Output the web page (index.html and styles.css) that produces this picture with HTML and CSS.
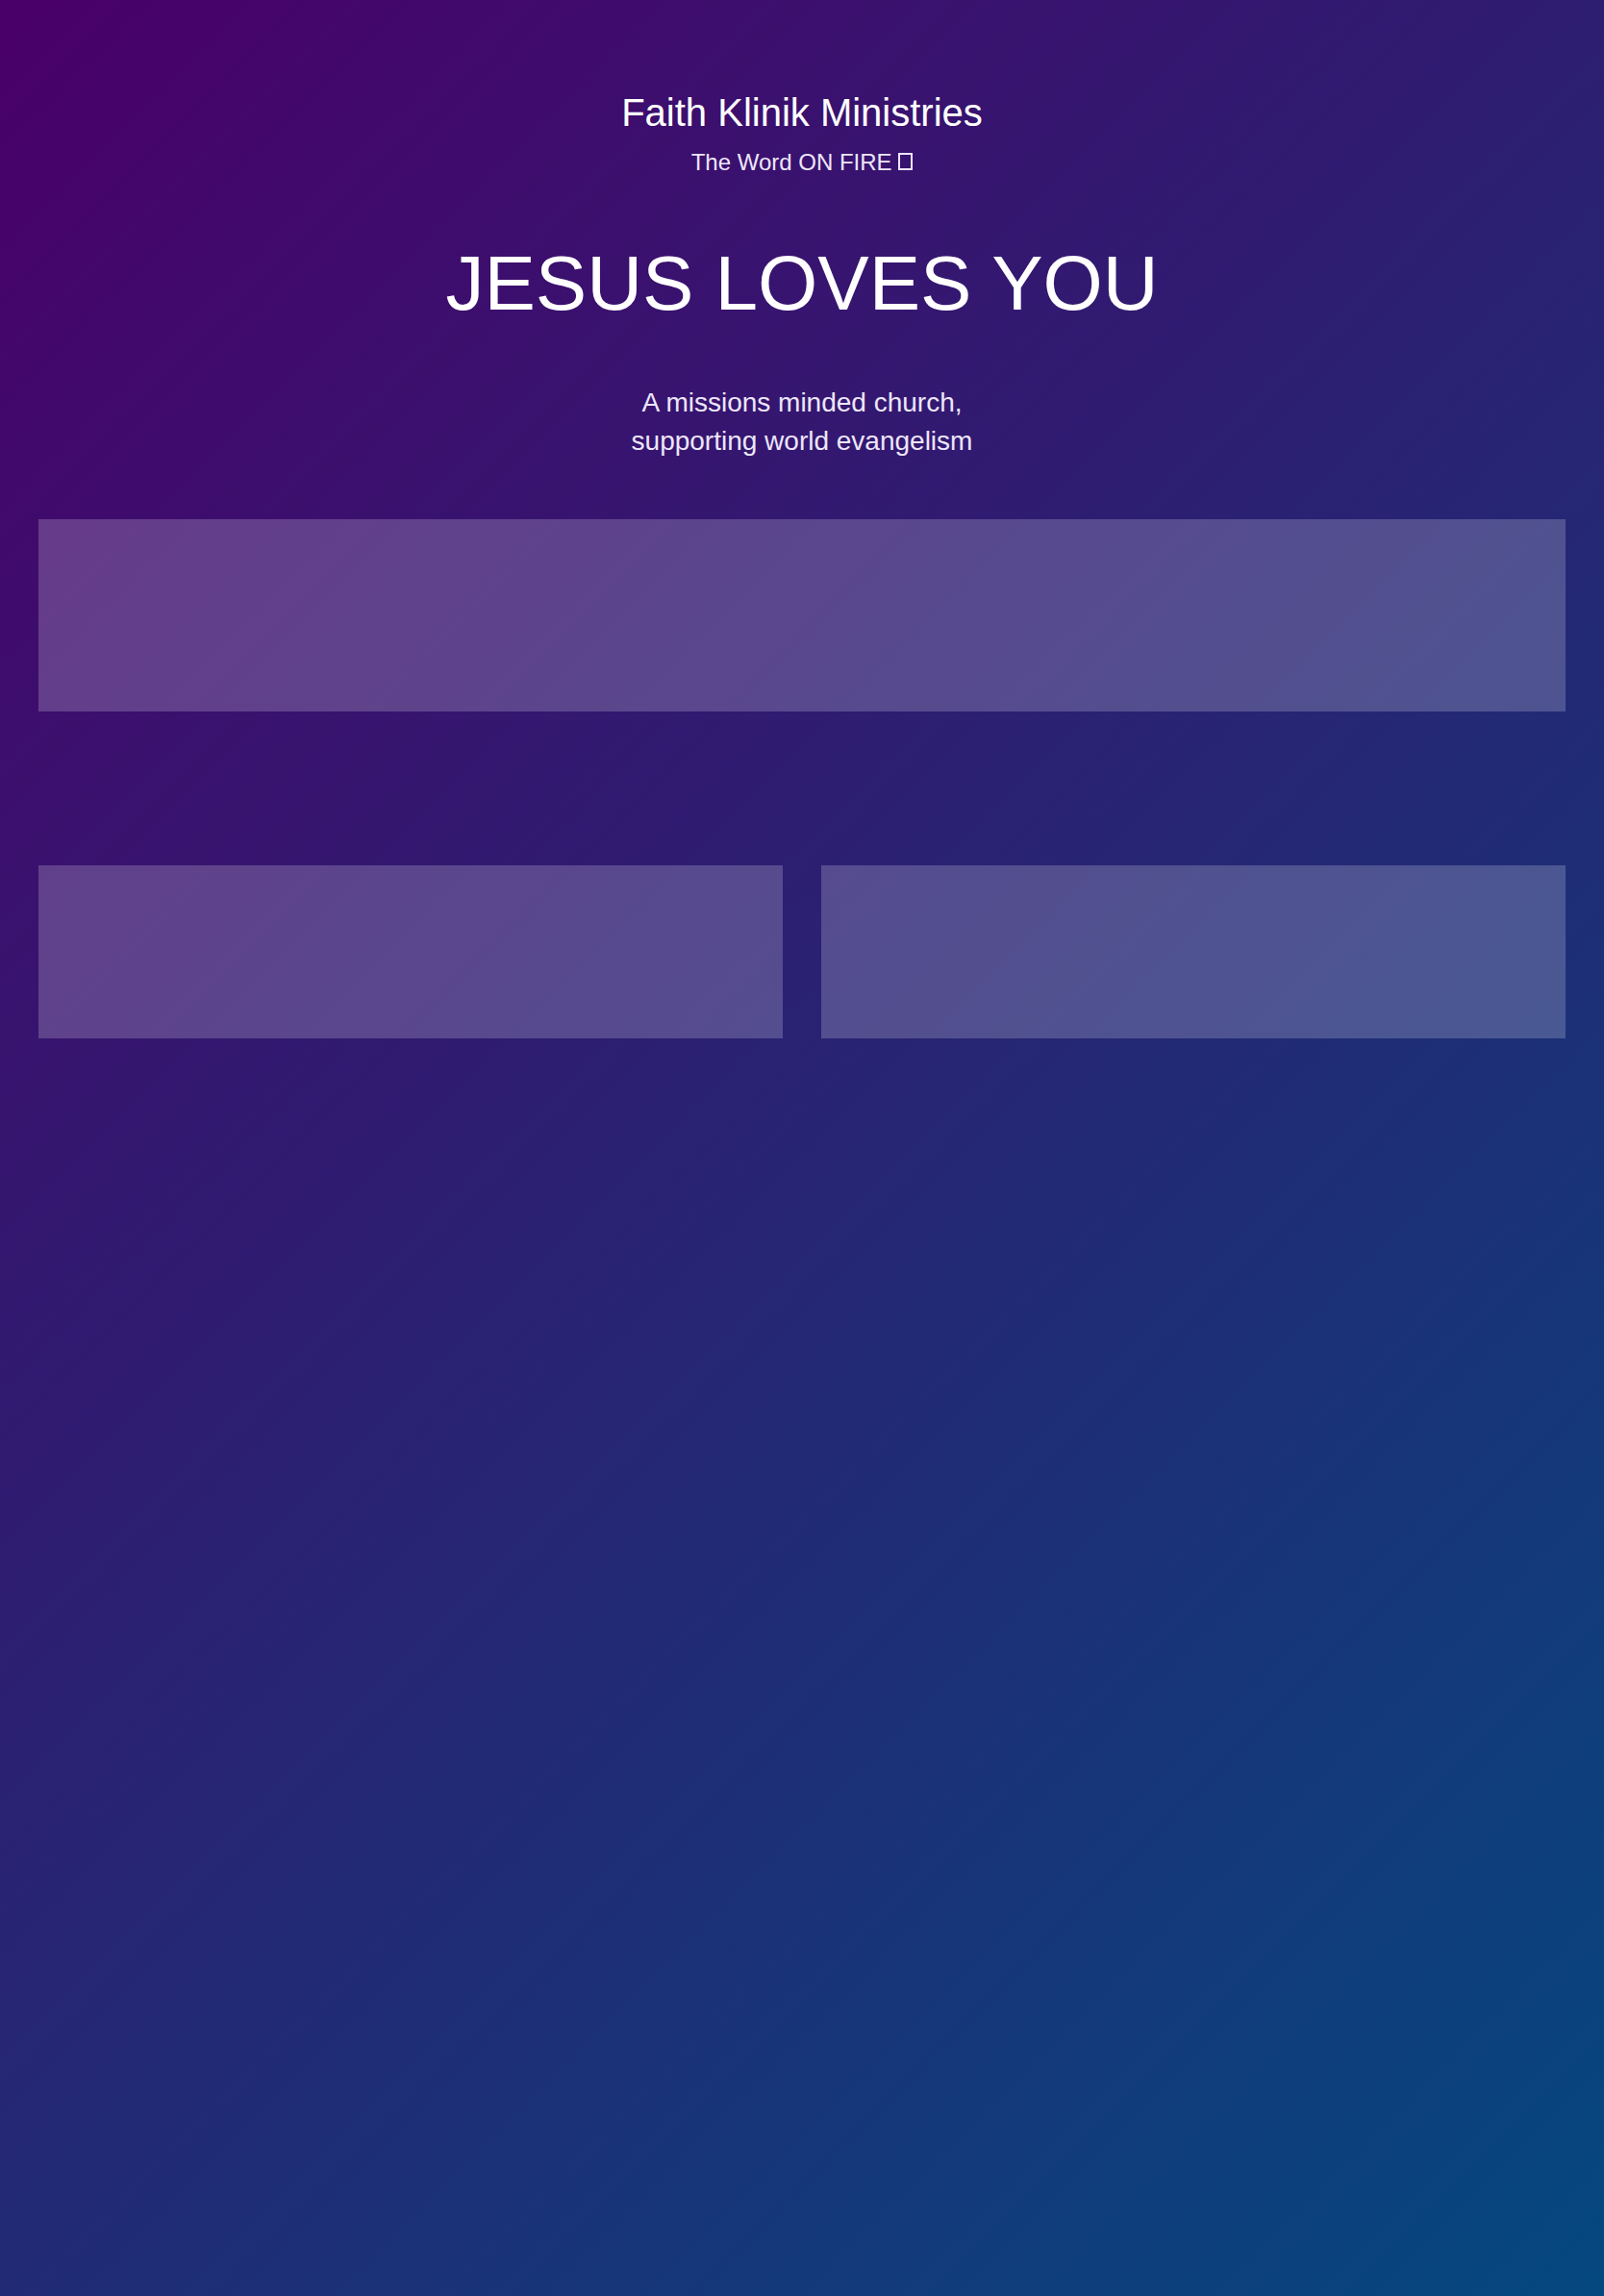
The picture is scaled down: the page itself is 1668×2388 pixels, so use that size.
FILE: index.html
```html
<!DOCTYPE html>
<html lang="en">
<head>
  <meta charset="utf-8">
  <meta name="viewport" content="width=device-width, initial-scale=1">
  <title>Faith Klinik Ministries</title>
  <link rel="stylesheet" href="styles.css">
</head>
<body>
  <main class="page">
    <header class="brand">
      <p class="brand-name">Faith Klinik Ministries</p>
      <p class="brand-motto">The Word ON FIRE <span class="glyph-box"></span></p>
    </header>
    <h1 class="headline">JESUS LOVES YOU</h1>
    <p class="mission">A missions minded church,<br>supporting world evangelism</p>
    <section class="panel panel-wide"></section>
    <div class="panel-row">
      <section class="panel"></section>
      <section class="panel"></section>
    </div>
  </main>
</body>
</html>
```

FILE: styles.css
```css
* {
  box-sizing: border-box;
}

body {
  margin: 0;
  color: #fff;
  font-family: Helvetica, "Liberation Sans", Arial, sans-serif;
}

.page {
  min-height: 100vh;
  padding: 93px 40px 40px;
  background: linear-gradient(135deg, #4a0069, #05487f);
  text-align: center;
}

.brand {
  display: flex;
  flex-direction: column;
  gap: 12px;
}

.brand-name,
.brand-motto,
.headline,
.mission {
  margin: 0;
  font-weight: 400;
}

.brand-name {
  font-size: 40px;
  line-height: 48px;
}

.brand-motto {
  color: #ede6fa;
  font-size: 24px;
  line-height: 32px;
}

.glyph-box {
  display: inline-block;
  width: 15px;
  height: 18px;
  border: 2px solid currentColor;
}

.headline {
  margin-top: 62px;
  font-size: 80px;
  line-height: 96px;
}

.mission {
  margin-top: 56px;
  color: #ede6fa;
  font-size: 28px;
  line-height: 40px;
}

.panel {
  height: 180px;
  background: rgba(255, 255, 255, 0.2);
}

.panel-wide {
  height: 200px;
  margin-top: 61px;
}

.panel-row {
  display: grid;
  grid-template-columns: 1fr 1fr;
  gap: 40px;
  margin-top: 160px;
}
```
